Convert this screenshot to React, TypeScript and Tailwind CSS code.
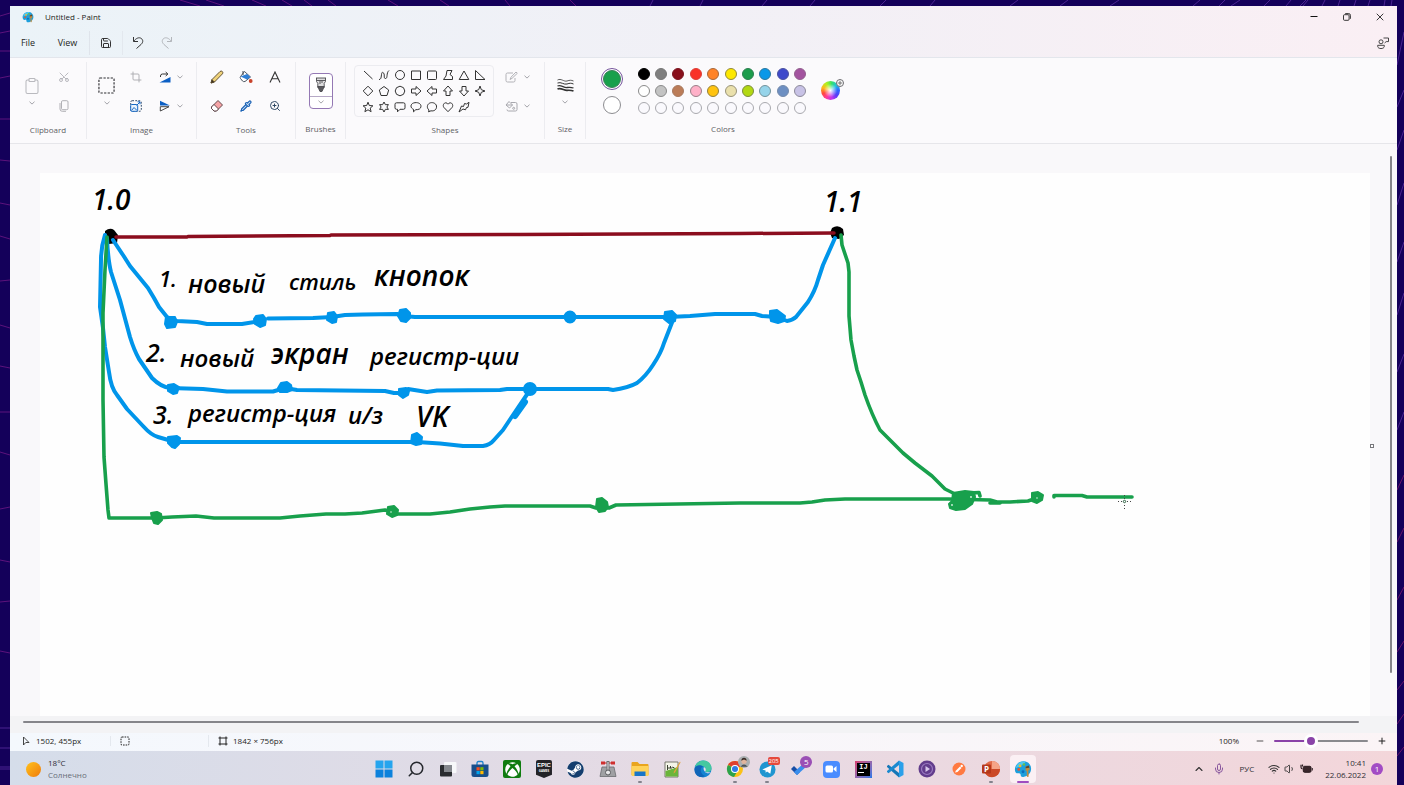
import { useState, type ReactNode } from "react";
import {
  Crop,
  Scissors,
  Clipboard,
  ZoomIn,
  Save,
  Wifi,
  Volume1,
  Mic,
  ChevronUp,
  Search,
  X,
  Minus,
  Plus,
  Pipette,
} from "lucide-react";
import { FaXbox, FaSteam } from "react-icons/fa";

const BLUE = "#0095ea";
const GREEN = "#18a04c";

function Chevron() {
  return (
    <svg viewBox="0 0 6 4" className="h-1 w-1.5 shrink-0" fill="none" stroke="#9a9a9f" strokeWidth="0.9">
      <path d="M0.5 0.7 3 3.1 5.5 0.7" />
    </svg>
  );
}

function PaintLogo({ className }: { className: string }) {
  return (
    <svg viewBox="0 0 20 20" className={className}>
      <path d="M10.5 1.5C5 1.5 1 5.600 1 10.500c0 3 1.600 4.600 3.800 4.300 2-.3 2.600.6 2.600 2 0 1.600 1.300 2.200 3 2 5-.4 8.600-4.500 8.600-9C19 5 15.600 1.500 10.500 1.500z" fill="#1d9fdc" />
      <path d="M3 6C5 2.500 9 1 13 2c-2 3-6 5-11 7z" fill="#4cc8f0" />
      <circle cx="5.300" cy="10.500" r="1.500" fill="#e8552d" />
      <circle cx="6.800" cy="6.600" r="1.500" fill="#f6b92b" />
      <circle cx="11" cy="4.900" r="1.400" fill="#6bc04b" />
      <circle cx="10" cy="13" r="1.600" fill="#0b6fbe" />
      <path d="M13 7.500 16.500 6l1 5-1.700.6.5 6.400c0 1-1.800 1.200-2 0l-.2-6-1.300-.4z" fill="#c08a3c" />
      <path d="M13 7.500 16.500 6l.6 2.500-4.200.6z" fill="#5d4630" />
    </svg>
  );
}

function Backdrop() {
  return (
    <svg className="absolute inset-0 h-full w-full" viewBox="0 0 1404 785" preserveAspectRatio="none" fill="none" strokeWidth="1">
      <path
        stroke="#5c127c"
        d="M0 16 10 13M0 33 10 31M0 51 10 51M0 78 10 76M0 119h10M0 160l10 1M0 203l10 2M0 236l10 3M0 281l10-1M0 325l10 3M0 366l10 2M0 412h10M0 452l10 3M0 509l10-2M0 560l10 2M0 602l10-1M0 651l10 2M180 0l20 6M206 0l18 6M252 0l14 6M282 0l10 6M304 0l8 6M328 0l8 6M388 0l10 6M440 0l9 6M505 0l5 6M570 0l6 6"
      />
      <path
        stroke="#4b2390"
        d="M0 728h10M0 748h10M0 767h10M0 769h10M650 6l3-6M700 6l3-6M762 6l5-6M810 6l5-6M880 6l6-6M930 6l5-6M1010 6l8-6M1060 6l8-6M1110 6l9-6M1193 6l7-6M1219 6l6-6M1231 6l9-6M1264 6l6-6M1286 6l5-6M1300 6l6-6M1303 6l5-6M1322 6l3-6M1338 6l2-6M1354 6l2-6M1368 6l2-6M1384 6l1-6M1391 6l1-6M1397 65l7-33M1397 107l7-17M1397 150l7-20M1397 205l7-22M1397 262l7-20M1397 315l7-22M1397 372l7-18M1397 430l7-18"
      />
      <path stroke="#6a1468" d="M1397 490l7-15M1397 542l7-14M1397 600l7-13M1397 652l7-11M1397 690l7-9M1397 724l7-10M1397 756l7-9" />
    </svg>
  );
}

function TitleBar() {
  const winBtn = "grid w-[33px] place-items-center";
  return (
    <header className="flex h-[22px] items-stretch pr-px">
      <div className="flex flex-1 items-center gap-[11px] pl-3">
        <PaintLogo className="h-3 w-3" />
        <h1 className="text-[8px] text-[#1e1e22]">Untitled - Paint</h1>
      </div>
      <button aria-label="Minimize" className={winBtn}>
        <svg viewBox="0 0 8 8" className="h-2 w-2" stroke="#111" strokeWidth="1"><path d="M.5 3.500h7" /></svg>
      </button>
      <button aria-label="Restore" className={winBtn}>
        <svg viewBox="0 0 8 8" className="h-2 w-2" fill="none" stroke="#222" strokeWidth="0.9">
          <rect x=".5" y="1.700" width="5.600" height="5.600" rx="1" />
          <path d="M2.200.6h3.500q1.700 0 1.700 1.700v3.500" />
        </svg>
      </button>
      <button aria-label="Close" className={winBtn}>
        <X className="h-3 w-3" stroke="#222" strokeWidth={1.8} />
      </button>
    </header>
  );
}

function MenuBar() {
  return (
    <nav className="flex h-[30px] items-center border-b border-[#e3e6ec] text-[9px] text-[#1e1e22]">
      <button className="w-9">File</button>
      <button className="w-[43px]">View</button>
      <span className="h-6 w-px bg-[#dfe4eb]" />
      <button aria-label="Save" className="grid w-8 place-items-center">
        <Save className="h-3 w-3" stroke="#333" strokeWidth={2} />
      </button>
      <span className="h-6 w-px bg-[#e3e8ee]" />
      <button aria-label="Undo" className="grid w-[30px] place-items-center">
        <svg viewBox="0 0 12 14" className="h-[14px] w-3" fill="none" stroke="#333" strokeWidth="1">
          <path d="M1.500 1v4.500H6M1.700 5.300C4 2.300 7 .8 9.300 2.500c2.300 1.700 1.600 4.200-.3 6L4.500 12.500" />
        </svg>
      </button>
      <button aria-label="Redo" className="grid w-7 place-items-center">
        <svg viewBox="0 0 12 14" className="h-[14px] w-3" fill="none" stroke="#b3b6bb" strokeWidth="1">
          <path d="M10.500 1v4.500H6M10.300 5.300C8 2.300 5 .8 2.700 2.500.4 4.200 1.100 6.700 3 8.500l4.500 4" />
        </svg>
      </button>
      <span className="flex-1" />
      <button aria-label="Feedback" className="mr-2 grid place-items-center">
        <svg viewBox="0 0 12 12" className="h-3 w-3" fill="none" stroke="#333" strokeWidth="0.900">
          <circle cx="4" cy="4.800" r="2" />
          <path d="M.7 8.300h6.600v1c0 3-6.600 3-6.600 0zM6.500 1h5v3.600h-2.300L7.600 6" />
        </svg>
      </button>
    </nav>
  );
}

function Group({ label, className, children }: { label: string; className: string; children: ReactNode }) {
  return (
    <section aria-label={label} className={`flex shrink-0 flex-col border-r border-[#ececf0] ${className}`}>
      <div className="flex h-[58px] items-center justify-center">{children}</div>
      <div className="flex h-5 items-center justify-center text-[8px] text-[#5e5e64]">{label}</div>
    </section>
  );
}

function IconButton({ label, children, className = "" }: { label: string; children: ReactNode; className?: string }) {
  return (
    <button aria-label={label} className={`flex h-[29px] items-center justify-center ${className}`}>
      {children}
    </button>
  );
}

const SHAPES: { name: string; d: string }[] = [
  { name: "Line", d: "M2 2 10.500 10" },
  { name: "Curve", d: "M1 10.500C4.500 11 2.500 2 5 3.500s0 6 2.500 6S8 4 11 1.500" },
  { name: "Oval", d: "M10.500 6a4.500 4.500 0 1 1-9 0 4.500 4.500 0 0 1 9 0z" },
  { name: "Rectangle", d: "M1.500 2h9v8.500h-9z" },
  { name: "Rounded rectangle", d: "M2.500 2h7q1 0 1 1v6.500q0 1-1 1h-7q-1 0-1-1V3q0-1 1-1z" },
  { name: "Polygon", d: "M5 1.500h5L8 5.500l2.500 2v3h-9L4 7z" },
  { name: "Triangle", d: "M6 2 10.800 10.500H1.200z" },
  { name: "Right triangle", d: "M1.500 1.500 11 10.500H1.500z" },
  { name: "Diamond", d: "M6 1.200 10.800 6 6 10.800 1.200 6z" },
  { name: "Pentagon", d: "M6 1.500 10.700 5 9 10.500H3L1.300 5z" },
  { name: "Hexagon", d: "M6 1.200l3.500 1.500 1.300 3.300-1.300 3.300L6 10.800 2.500 9.300 1.200 6l1.300-3.300z" },
  { name: "Right arrow", d: "M1.500 4H6V1.500L11 6l-5 4.500V8H1.500z" },
  { name: "Left arrow", d: "M10.500 4H6V1.500L1 6l5 4.500V8h4.500z" },
  { name: "Up arrow", d: "M4 10.500V6H1.500L6 1l4.500 5H8v4.500z" },
  { name: "Down arrow", d: "M4 1.500V6H1.500L6 11l4.500-5H8V1.500z" },
  { name: "Four-point star", d: "M6 1l1.300 3.700L11 6 7.300 7.300 6 11 4.700 7.300 1 6l3.700-1.300z" },
  { name: "Five-point star", d: "M6 1.200l1.300 3.300 3.600.3-2.700 2.300.9 3.600L6 8.800l-3.100 1.900.9-3.600L1.100 4.800l3.600-.3z" },
  { name: "Six-point star", d: "M6 1l1.400 2.700 3-.1L8.900 6l1.500 2.400-3-.1L6 11 4.600 8.300l-3 .1L3.100 6 1.600 3.600l3 .1z" },
  { name: "Rounded callout", d: "M2.500 1.800h7q1.500 0 1.500 1.500v3.500q0 1.500-1.500 1.500H6l-2.500 2.500V8.300h-1Q1 8.300 1 6.800V3.300q0-1.500 1.500-1.500z" },
  { name: "Oval callout", d: "M3.500 8.300C0 7 .3 3 3.500 2 7.500.800 11 2.500 11 5.200S8.500 8.800 5.800 8.700L3.500 10.800z" },
  { name: "Cloud callout", d: "M3 9C.5 7 1 3.500 3.500 2.200 6 .8 10 2 10.500 5 11 8.500 8 10.500 5 9.800L2.500 10.800z" },
  { name: "Heart", d: "M6 10.700 1.800 6.300C.2 4 2.500.7 5 2.200l1 1 1-1c2.500-1.500 4.800 1.800 3.200 4.100z" },
  { name: "Lightning", d: "M1 11 3.500 5 5.500 5.500 6.500 2.500 8.500 3 11 1.300 10 6.300 8.500 6.500 7.500 8.800 5 8z" },
];

const SWATCHES: { name: string; cls: string }[] = [
  { name: "Black", cls: "bg-[#000000] border-[#000000]" },
  { name: "Gray", cls: "bg-[#7f7f7f] border-[#777777]" },
  { name: "Dark red", cls: "bg-[#880f1b] border-[#7c1620]" },
  { name: "Red", cls: "bg-[#f93227] border-[#dd4038]" },
  { name: "Orange", cls: "bg-[#ff8328] border-[#a8673a]" },
  { name: "Yellow", cls: "bg-[#fde800] border-[#938a3a]" },
  { name: "Green", cls: "bg-[#1c9c4c] border-[#2c8050]" },
  { name: "Turquoise", cls: "bg-[#0a98e8] border-[#2c789e]" },
  { name: "Indigo", cls: "bg-[#3f4acb] border-[#4c53a0]" },
  { name: "Purple", cls: "bg-[#a3539f] border-[#93608f]" },
  { name: "White", cls: "bg-white border-[#8a8a8a]" },
  { name: "Light gray", cls: "bg-[#c3c3c3] border-[#8a8a8a]" },
  { name: "Brown", cls: "bg-[#bb7c58] border-[#a87a60]" },
  { name: "Rose", cls: "bg-[#ffb0c8] border-[#9a7f88]" },
  { name: "Gold", cls: "bg-[#ffc30f] border-[#93803f]" },
  { name: "Light yellow", cls: "bg-[#eae0ac] border-[#98937a]" },
  { name: "Lime", cls: "bg-[#b2d812] border-[#7d8c40]" },
  { name: "Light turquoise", cls: "bg-[#96d4ea] border-[#74939c]" },
  { name: "Blue-gray", cls: "bg-[#6d8fc2] border-[#758bab]" },
  { name: "Lavender", cls: "bg-[#c8c2e6] border-[#8d8a9a]" },
  ...Array.from({ length: 10 }, (_, i) => ({ name: `Custom color ${i + 1}`, cls: "bg-[#faf9fd] border-[#a9a9ae]" })),
];

function Ribbon() {
  return (
    <div className="flex h-[86px] border-b border-[#e6e6ea] bg-[#fbfafc] py-1">
      <Group label="Clipboard" className="w-[77px]">
        <button aria-label="Paste" className="flex w-8 flex-col items-center gap-1.5">
          <Clipboard className="h-[18px] w-[18px]" stroke="#b9b9be" strokeWidth={1.4} />
          <Chevron />
        </button>
        <div className="w-8">
          <IconButton label="Cut" className="w-8"><Scissors className="h-3 w-3 -rotate-90" stroke="#a8a8ae" strokeWidth={1.6} /></IconButton>
          <IconButton label="Copy" className="w-8">
            <svg viewBox="0 0 10 12" className="h-3 w-2.5" fill="none" stroke="#a8a8ae" strokeWidth="0.9">
              <rect x="2.500" y=".7" width="6.500" height="9" rx="1.200" />
              <path d="M1 3v6q0 2.300 2.300 2.300H7" />
            </svg>
          </IconButton>
        </div>
      </Group>

      <Group label="Image" className="w-[110px]">
        <button aria-label="Select" className="flex w-[30px] flex-col items-center gap-[7px]">
          <svg viewBox="0 0 18 18" className="h-[17px] w-[17px]" fill="none" stroke="#2b2b2f" strokeWidth="1.200" strokeDasharray="2.400 1.400">
            <rect x="1" y="1" width="16" height="16" rx="1" />
          </svg>
          <Chevron />
        </button>
        <div className="w-7">
          <IconButton label="Crop" className="w-7"><Crop className="h-3 w-3" stroke="#a8a8ae" strokeWidth={1.8} /></IconButton>
          <IconButton label="Resize" className="w-7">
            <svg viewBox="0 0 12 12" className="h-3 w-3" fill="none">
              <rect x=".7" y=".7" width="10.600" height="10.600" rx="1.500" stroke="#2f4a6a" strokeDasharray="1.800 1.300" />
              <rect x=".7" y="4.500" width="7" height="6.800" rx="1" fill="#e9f3fd" stroke="#1768c4" />
              <path d="m1.500 10.500 2.500-3 3 3M6.500 5.500 10 2M7.500 1.800H10v2.500" stroke="#1768c4" />
            </svg>
          </IconButton>
        </div>
        <div className="w-[42px]">
          <IconButton label="Rotate" className="w-full gap-1.5">
            <svg viewBox="0 0 12 12" className="h-3 w-3">
              <path d="M.5 11.500h11V6z" fill="#0c5fc4" />
              <path d="M1.500 6V5q0-2 2-2h5M6.700 1l2.200 2-2.200 2" fill="none" stroke="#333" strokeWidth="1" />
            </svg>
            <Chevron />
          </IconButton>
          <IconButton label="Flip" className="w-full gap-1.5">
            <svg viewBox="0 0 12 12" className="h-3 w-3">
              <path d="M1 .8v4.700h10z" fill="#0c5fc4" />
              <path d="M1.300 11V6.700H10z" fill="#fff" stroke="#333" strokeWidth=".9" />
            </svg>
            <Chevron />
          </IconButton>
        </div>
      </Group>

      <Group label="Tools" className="w-[99px]">
        <div className="grid grid-cols-3">
          <IconButton label="Pencil" className="w-[29px]">
            <svg viewBox="0 0 14 14" className="h-3.5 w-3.5" stroke="#55452a" strokeWidth=".9">
              <path d="m1 13 1-3.500L10 1.500q1.300-1 2.300 0t.2 2.300L4.500 12z" fill="#efd27a" />
              <path d="m1 13 1-3.300L4.300 12z" fill="#3a3020" />
            </svg>
          </IconButton>
          <IconButton label="Fill" className="w-[29px]">
            <svg viewBox="0 0 14 14" className="h-3.5 w-3.5">
              <path d="M5.500 1.500 11.500 7 6 11.500Q4.500 12 3.500 11L1.500 8.500Q.8 7.500 1.500 6.500z" fill="#fff" stroke="#3a4450" strokeWidth=".9" />
              <path d="M1.500 6.500 8 4l3.500 3L8 9.500z" fill="#2f7fd6" />
              <path d="M4 1v4" stroke="#3a4450" />
              <circle cx="11.700" cy="11" r="1.900" fill="#c8432b" />
            </svg>
          </IconButton>
          <IconButton label="Text" className="w-[29px]">
            <svg viewBox="0 0 12 12" className="h-3 w-3" fill="none" stroke="#333" strokeWidth="1.100"><path d="M1 11.500 6 1l5 10.500M2.800 7.800h6.400" /></svg>
          </IconButton>
          <IconButton label="Eraser" className="w-[29px]">
            <svg viewBox="0 0 14 14" className="h-3.5 w-3.5" stroke="#553a3e" strokeWidth=".9">
              <path d="M8 1.500 12.500 6 6.500 12H4L1.500 9.500V8z" fill="#f6a3a6" />
              <path d="M4 5.500 8.500 10 6.500 12H4L1.500 9.500V8z" fill="#fff" />
            </svg>
          </IconButton>
          <IconButton label="Color picker" className="w-[29px]"><Pipette className="h-3 w-3" stroke="#1b62b5" fill="#d5e6f8" strokeWidth={2.4} /></IconButton>
          <IconButton label="Magnifier" className="w-[29px]"><ZoomIn className="h-3 w-3" stroke="#28415e" strokeWidth={1.9} /></IconButton>
        </div>
      </Group>

      <Group label="Brushes" className="w-[50px]">
        <button aria-label="Brushes" className="flex h-9 w-6 flex-col items-center rounded border border-[#9478b4] bg-white">
          <span className="grid h-[23px] w-full place-items-center border-b border-[#b6a9c6]">
            <svg viewBox="0 0 12 16" className="h-4 w-3" stroke="#4a4a4e" strokeWidth=".9">
              <path d="M1.500 1v3.500l1.300 1.800v4.200h6.400V6.300l1.300-1.800V1" fill="#dededf" />
              <path d="M1 1h10M2 3.500h8M5 4v3M7 4v2" />
              <path d="M2.800 9.500h6.400L7 14.500H5z" fill="#5a5a5e" />
            </svg>
          </span>
          <span className="grid flex-1 place-items-center"><Chevron /></span>
        </button>
      </Group>

      <Group label="Shapes" className="w-[199px]">
        <div className="grid grid-cols-8 rounded border border-[#ececf0] px-[5px] py-px">
          {SHAPES.map((s) => (
            <button key={s.name} aria-label={s.name} className="grid h-4 w-4 place-items-center">
              <svg viewBox="0 0 12 12" className="h-3 w-3" fill="none" stroke="#333" strokeWidth="1"><path d={s.d} /></svg>
            </button>
          ))}
        </div>
        <div className="w-[42px] pl-1">
          <IconButton label="Shape outline" className="w-full gap-1.5">
            <svg viewBox="0 0 13 12" className="h-3 w-[13px]" fill="none" stroke="#b2b2b7" strokeWidth="1">
              <path d="M8 2H2.500Q1 2 1 3.500v6Q1 11 2.500 11h6q1.500 0 1.500-1.500V7M5 8.500l1-2.300L11 1l1.300 1.300-5.200 5z" />
            </svg>
            <Chevron />
          </IconButton>
          <IconButton label="Shape fill" className="w-full gap-1.5">
            <svg viewBox="0 0 13 12" className="h-3 w-[13px]" fill="none" stroke="#a8a8ae" strokeWidth="1">
              <path d="M6 2.500h4.500Q12 2.500 12 4v5.500q0 1.500-1.500 1.500h-7Q2 11 2 9.500M1 5l3-3.500L7.500 5 4.500 8zM1 5h6.500" />
              <circle cx="8.700" cy="8.300" r="1" />
            </svg>
            <Chevron />
          </IconButton>
        </div>
      </Group>

      <Group label="Size" className="w-[41px]">
        <button aria-label="Size" className="flex flex-col items-center gap-2">
          <svg viewBox="0 0 17 14" className="h-[14px] w-[17px]" fill="none" stroke="#333">
            <path d="M.5 2C4 0 7 4 10 3s4-1 6.500 0" strokeWidth=".8" />
            <path d="M.5 5C4 3.500 7 7 10 6s4-1 6.500 0" strokeWidth="1" />
            <path d="M.5 8C4 6.500 7 10 10 9.500s4-.5 6.500.5" strokeWidth="1.300" />
            <path d="M.5 11C4 9.500 7 12.500 10 12.300s4-.3 6.500.7" strokeWidth="1.700" />
          </svg>
          <Chevron />
        </button>
      </Group>

      <section aria-label="Colors" className="flex w-[274px] shrink-0 flex-col">
        <div className="flex h-[58px] items-center pl-[15px]">
          <div className="flex w-[22px] flex-col items-center gap-1.5">
            <button aria-label="Color 1" className="grid h-[22px] w-[22px] place-items-center rounded-full border border-[#76559c] bg-white">
              <span className="h-[18px] w-[18px] rounded-full border border-[#3a8058] bg-[#18a04c]" />
            </button>
            <button aria-label="Color 2" className="h-[18px] w-[18px] rounded-full border border-[#8c8c90] bg-white" />
          </div>
          <div className="ml-3 grid w-[174px] grid-cols-10">
            {SWATCHES.map((s) => (
              <button key={s.name} aria-label={s.name} className="grid h-[17px] place-items-center">
                <span className={`h-3 w-3 rounded-full border ${s.cls}`} />
              </button>
            ))}
          </div>
          <button aria-label="Edit colors" className="relative ml-3 h-[19px] w-[19px] rounded-full bg-[radial-gradient(circle,white,transparent_50%),conic-gradient(from_90deg,#2f62ff,#5a3cf5,#c034ef,#ff3a9a,#ff4a3a,#ffb91a,#b2f21c,#34e06c,#20c0e0,#2f62ff)]">
            <span className="absolute -top-0.5 -right-1 grid h-2 w-2 place-items-center rounded-full border border-[#6c6c70] bg-white">
              <svg viewBox="0 0 6 6" className="h-1.5 w-1.5" stroke="#555" strokeWidth=".8"><path d="M3 .8v4.400M.8 3h4.400" /></svg>
            </span>
          </button>
        </div>
        <div className="flex h-5 items-center justify-center text-[8px] text-[#5e5e64]">Colors</div>
      </section>
    </div>
  );
}

type Word = { x: number; y: number; size: number; t: string };

const WORDS: Word[] = [
  { x: 92, y: 210, size: 28, t: "1.0" },
  { x: 824, y: 212, size: 28, t: "1.1" },
  { x: 159, y: 287, size: 22, t: "1." },
  { x: 188, y: 293, size: 25, t: "новый" },
  { x: 289, y: 290, size: 22, t: "стиль" },
  { x: 374, y: 286, size: 28, t: "кнопок" },
  { x: 146, y: 362, size: 25, t: "2." },
  { x: 180, y: 367, size: 24, t: "новый" },
  { x: 271, y: 364, size: 28, t: "экран" },
  { x: 370, y: 365, size: 24, t: "регистр-ции" },
  { x: 153, y: 424, size: 25, t: "3." },
  { x: 188, y: 422, size: 24, t: "регистр-ция" },
  { x: 348, y: 424, size: 24, t: "и/з" },
  { x: 416, y: 427, size: 28, t: "VK" },
];

function Drawing() {
  return (
    <svg
      className="absolute inset-0 h-full w-full"
      viewBox="40 173 1330 543"
      preserveAspectRatio="xMinYMin meet"
      fill="none"
      strokeWidth="4"
      strokeLinecap="round"
      strokeLinejoin="round"
    >
      <path d="M105 231q5-4 9-1l4 5-1 8-8 1-4-4z" fill="#000" />
      <path d="M832 228q6-4 11 1l1 6-5 4-7-1-2-5z" fill="#000" />
      <path stroke="#8b0d1e" strokeWidth="3.500" d="M116 237H187L188 236.500 330 235.500 331 235 520 234.500 740 233.500 834 233" />
      <g stroke={BLUE}>
        <path d="M113 240 123 255 130 266 139 277 148 288 154 298 159 307 167 317 177 321 197 322 207 324H242L260 321M268 318.500 313 318 332 317 345 315 363 314.500 397 314 404 316 415 317H669L690 316 715 314H755L762 316 777 317 787 321Q793 320 796 317L808 302Q815 291 818 280L823 265 835 238" />
        <path d="M107 238Q108 260 111 272L120 300 130 337Q134 350 139 359L152 378Q161 387 170 388L203 389 227 391.500H273L285 388 297 390 385 391 394 393H403L408 389 427 392 437 390.500 500 390 507 389H608L613 390Q628 388 637 383 646 376 653 365 661 353 664 343L673 320" />
        <path d="M105 235Q101 247 101 260L100 307 103 328 105 347 109 372Q111 388 117 395L127 409 143 426Q151 435 158 437L175 442H417L440 443.500 463 446H483Q490 445 494 440L503 430 513 415 528 393" />
        <path strokeWidth="6" d="M515 416 525 402" />
      </g>
      <g fill={BLUE} stroke={BLUE} strokeWidth="2">
        <path d="M166 317h9l2 5-2 5-8 1-2-4z" />
        <path d="M256 316l7-1 3 4-1 6-5 2-5-3-1-5z" />
        <path d="M328 313l6-1 3 4-1 6-4 1-5-3z" />
        <path d="M400 310l6-1 4 4v5l-4 4-5-1-3-5z" />
        <circle cx="570" cy="317" r="5.500" />
        <path d="M665 312l7-1 4 4-1 6-6 2-5-4z" />
        <path d="M770 311l7-1 8 6-1 5-6 2-7-2-1-5z" />
        <path d="M168 385l6-1 5 3-2 6-4 1-5-3z" />
        <path d="M281 383l6-1 4 3 1 5-5 2h-7l-2-4z" />
        <path d="M399 389l7-1 3 3-1 4-5 3-4-3z" />
        <circle cx="530" cy="389" r="6" />
        <path d="M168 437l9-1 3 2-1 6-4 4-3-1-4-4z" />
        <path d="M412 435l5-2 5 4-1 7-5 1-5-2z" />
      </g>
      <g stroke={GREEN} strokeWidth="3.600">
        <path d="M107 237 105 270 103 313V400L104 457 106 484 108 510 109 518H156L172 517 196 516 214 518H280L300 516 326 514H345L362 513 385 510 398 514 430 514 450 512 470 509 490 507 505 506H590L596 508 609 508 616 505 740 503H800L812 502 825 500 845 499H948L990 500 997 502 1010 502 1028 501 1037 498" />
        <path d="M841 235 842 245 848 263 849 272V316L851 340 854 356 857 370 861 382 865 395Q872 415 880 430L892 442 903 453 915 463 932 476 945 489 957 495M1054 497V495.500H1082L1087 497H1132M968 493 979 492.500 980 496M990 503 1000 503" />
      </g>
      <g fill={GREEN} stroke={GREEN} strokeWidth="2">
        <path d="M151 513l6-1 4 2 1 6-4 4-4-1-2-5z" />
        <path d="M388 507l6-1 4 4-1 5-5 2-5-3z" />
        <path d="M597 499l5-1 5 4 1 5-3 4-6 1-3-5z" />
        <path d="M953 493l12-2 9 1 1 5-3 7-7 5-9 1-6-2-1-4 3-3z" />
        <path d="M1032 493l6-1 5 3-1 5-5 3-5-2z" />
      </g>
      <g fill="#d9f3e2">
        <circle cx="952" cy="505" r=".9" />
        <circle cx="971" cy="497" r=".9" />
        <circle cx="1037" cy="498" r=".8" />
        <circle cx="391" cy="512" r=".8" />
      </g>
      <g stroke="#444" strokeWidth="1" strokeLinecap="butt" strokeDasharray="1 2">
        <path d="M1124.500 495v4M1124.500 505v5M1118 501.500h4M1127 501.500h5" />
        <circle cx="1124.500" cy="501.500" r="1.200" strokeDasharray="none" stroke="#2a6040" />
      </g>
      <g className="fill-black font-['Open_Sans',sans-serif] font-semibold italic">
        {WORDS.map((w) => (
          <text key={`${w.x}-${w.y}`} x={w.x} y={w.y} fontSize={w.size}>
            {w.t}
          </text>
        ))}
      </g>
    </svg>
  );
}

function Workspace() {
  return (
    <main className="flex min-h-[400px] flex-1 flex-col bg-[#f9f8fa]">
      <div className="flex flex-1">
        <div className="flex flex-1 pt-[29px] pl-[30px]">
          <div className="relative flex-1 bg-[#fefefe]">
            <Drawing />
          </div>
        </div>
        <div className="flex w-5 items-center pt-[31px]">
          <span className="h-1 w-1 border border-[#77777c] bg-white" />
        </div>
        <div className="flex w-[7px] pt-3 pb-[43px]">
          <span className="w-0.5 rounded bg-[#85858a]" />
        </div>
      </div>
      <div className="h-[17px] bg-[#f3f3f5] pt-[5px] pr-[38px] pl-[13px]">
        <div className="h-0.5 rounded bg-[#85858a]" />
      </div>
    </main>
  );
}

function StatusBar() {
  const [zoom, setZoom] = useState(38);
  return (
    <footer className="flex h-[18px] items-center bg-linear-to-r from-[#f4f8fd] via-[#f8f7fb] to-[#fbf4f6] pb-0.5 text-[8px] text-[#1e1e22]">
      <div className="flex w-[100px] items-center gap-1.5 pl-3">
        <svg viewBox="0 0 8 10" className="h-2.5 w-2" fill="none" stroke="#333" strokeWidth=".9"><path d="M1.500 1v8l2.300-2.500H7z" /></svg>
        1502, 455px
      </div>
      <div className="flex w-[98px] items-center border-l border-[#e4e8ee] pl-[9px]">
        <svg viewBox="0 0 10 10" className="h-2.5 w-2.5" fill="none" stroke="#222" strokeWidth="1" strokeDasharray="1.600 1">
          <rect x="1" y="1" width="8" height="8" rx="1" />
        </svg>
      </div>
      <div className="flex flex-1 items-center gap-[5px] border-l border-[#e4e8ee] pl-[9px]">
        <svg viewBox="0 0 10 10" className="h-2.5 w-2.5" fill="none" stroke="#222" strokeWidth="1"><path d="M2 .5v9M8 .5v9M.5 2h9M.5 8h9" /></svg>
        1842 × 756px
      </div>
      <label htmlFor="zoom" className="pr-4">100%</label>
      <button aria-label="Zoom out" className="pr-[9px]"><Minus className="h-2.5 w-2.5" stroke="#333" strokeWidth={2} /></button>
      <input
        id="zoom"
        type="range"
        value={zoom}
        onChange={(e) => setZoom(Number(e.target.value))}
        className="h-0.5 w-[94px] appearance-none rounded [&::-webkit-slider-thumb]:h-3.5 [&::-webkit-slider-thumb]:w-3.5 [&::-webkit-slider-thumb]:appearance-none [&::-webkit-slider-thumb]:rounded-full [&::-webkit-slider-thumb]:border-[3px] [&::-webkit-slider-thumb]:border-white [&::-webkit-slider-thumb]:bg-[#8a43a8]"
        style={{ background: `linear-gradient(to right, #8a43a8 ${zoom}%, #8a8a8e ${zoom}%)` }}
      />
      <button aria-label="Zoom in" className="pr-[10px] pl-[9px]"><Plus className="h-2.5 w-2.5" stroke="#222" strokeWidth={2.4} /></button>
    </footer>
  );
}

const APPS: { name: string; running?: boolean; active?: boolean; icon: ReactNode }[] = [
  { name: "Start", icon: <svg viewBox="0 0 18 18" className="h-[18px] w-[18px]"><path d="M.5.500h8v8h-8zM9.500.500h8v8h-8z" fill="#25a5ee" /><path d="M.5 9.500h8v8h-8zM9.500 9.500h8v8h-8z" fill="#0c82dc" /></svg> },
  { name: "Search", icon: <Search className="h-[18px] w-[18px] -scale-x-100" stroke="#26282e" strokeWidth={2} /> },
  { name: "Task view", icon: <svg viewBox="0 0 18 18" className="h-[18px] w-[18px]"><rect x="5" y="2" width="12.500" height="11" rx="1" fill="#f7f8fa" /><rect x="1" y="5" width="12" height="11.500" rx="1" fill="#2a2c30" /><path d="M5 5h8v7H5z" fill="#85888e" /></svg> },
  { name: "Microsoft Store", icon: <svg viewBox="0 0 18 18" className="h-[18px] w-[18px]"><path d="M6 5V3q0-1.500 1.500-1.500h3Q12 1.500 12 3v2" fill="none" stroke="#1b82cc" strokeWidth="1.300" /><path d="M.5 4.500h17v10q0 2.500-2.500 2.500H3Q.5 17 .5 14.500z" fill="#174f8c" /><path d="M5.500 7.200h3.200v3.200H5.500z" fill="#f25022" /><path d="M9.300 7.200h3.200v3.200H9.300z" fill="#7fba00" /><path d="M5.500 11h3.200v3.200H5.500z" fill="#00a4ef" /><path d="M9.300 11h3.200v3.200H9.300z" fill="#ffb900" /></svg> },
  { name: "Xbox", icon: <span className="grid h-[18px] w-[18px] place-items-center rounded-xs bg-[#107c10]"><FaXbox className="h-[15px] w-[15px] text-white" /></span> },
  { name: "Epic Games", icon: <span className="flex h-[18px] w-4 flex-col items-center rounded-xs bg-[#232327] text-white [clip-path:polygon(0_0,100%_0,100%_82%,50%_100%,0_82%)]"><span className="font-['Liberation_Sans',sans-serif] text-[6px] leading-[10px] font-bold">EPIC</span><span className="text-[3px] leading-[3px] font-bold">GAMES</span></span> },
  { name: "Steam", icon: <span className="grid h-[17px] w-[17px] place-items-center rounded-full bg-white"><FaSteam className="h-[17px] w-[17px] text-[#143e6e]" /></span> },
  { name: "Save tool", icon: <svg viewBox="0 0 18 18" className="h-[18px] w-[18px]"><path d="M3 7h12l2 9.500H1z" fill="#9fa0a3" stroke="#6a6b6e" strokeWidth=".8" /><path d="M2 1.500h4v3H2zM12 1.500h4v3h-4z" fill="#cf2f2f" /><path d="M6 3h6" stroke="#cf5a5a" strokeWidth="1.500" /><path d="M9 1v10" stroke="#6c6d70" strokeWidth="3" /><path d="M9 2v8" stroke="#e4e4e6" /><circle cx="9" cy="12.500" r="2.500" fill="#e8e8ea" stroke="#5a5b5e" /></svg> },
  { name: "File Explorer", running: true, icon: <svg viewBox="0 0 18 18" className="h-[18px] w-[18px]"><path d="M.5 3Q.5 2 1.500 2h5l2 2h8q1 0 1 1v10h-17z" fill="#e9a51e" /><path d="M.5 6h17v9.500q0 .5-1 .5h-15q-1 0-1-1z" fill="#ffd35a" /><path d="M3.500 11.500h11V16h-11z" fill="#1876c8" /></svg> },
  { name: "Notepad++", icon: <svg viewBox="0 0 18 18" className="h-[18px] w-[18px]"><path d="M2 2h13v15H2z" fill="#f4f5e8" stroke="#6b6e60" strokeWidth=".9" /><path d="M2.500 11 15 7v9.500H2.500z" fill="#6ab53a" /><path d="M4.500 5v5M4.500 8h3v-2M7.500 9l2-2 2 1" fill="none" stroke="#3a4030" /><path d="m17 1.500-6 10-.5 2 1.500-1 5.500-10z" fill="#e4a13a" /></svg> },
  { name: "Edge", icon: <svg viewBox="0 0 18 18" className="h-[18px] w-[18px]"><circle cx="9" cy="9" r="8.500" fill="#1583d2" /><path d="M1 7C2 2.500 6 .5 9.500.5c5 0 8.300 4 8 8-.2 3-3 4.200-6.500 3.200C13.500 7 8 4 1 7z" fill="#45c8a0" /><path d="M.5 9C1 5.500 6 4 9 6.500c-3 1-3.500 7 2 9.500-5 3-11-1-10.500-7z" fill="#1065b8" /><path d="M17 12.500c-1.500 1-5 1-6-.8-2-2-1.500-4-1-4.700 2 1 2.500 3 1 4.700 1.800.8 4.500.5 6 .8z" fill="#e4e0ea" /></svg> },
  { name: "Chrome", running: true, icon: <span className="relative"><svg viewBox="0 0 18 18" className="h-[18px] w-[18px]"><circle cx="9" cy="9" r="8" fill="#fbc116" /><path d="M9 9 2 4.500A8.500 8.500 0 0 1 16.500 5.500z" fill="#e0402f" /><path d="M2 5a8 8 0 0 0 6 12l4-7z" fill="#2ba24c" /><circle cx="9" cy="9" r="4" fill="#fff" /><circle cx="9" cy="9" r="3" fill="#2f7be5" /></svg><svg viewBox="0 0 10 10" className="absolute -top-1 -right-1.5 h-3 w-3"><circle cx="5" cy="5" r="5" fill="#a9aeb0" /><path d="M2 9q3-4 6 0" fill="#4b5155" /><circle cx="5" cy="4.500" r="2.200" fill="#e1b49c" /><path d="M2.700 4q.3-2.500 2.300-2.500T7.300 4L5 3z" fill="#3a2c26" /></svg></span> },
  { name: "Telegram", running: true, icon: <span className="relative"><svg viewBox="0 0 18 18" className="h-[17px] w-[17px]"><circle cx="9" cy="9" r="8.500" fill="#2095d0" /><path d="m3.500 9 10-4.500-1.500 9-3.500-2.500L7 12.500V10z" fill="#fff" /></svg><span className="absolute -top-1 -right-1 rounded-xs bg-[#e5493c] px-px text-[6px] leading-[8px] text-white">205</span></span> },
  { name: "To Do", icon: <span className="relative"><svg viewBox="0 0 18 18" className="h-[18px] w-[18px]"><path d="m1 9 3-3 6 6-3 3z" fill="#174ea6" /><path d="M7 15 4 12 14 3l3 3z" fill="#3a8eed" /></svg><span className="absolute -top-1 -right-1 grid h-3 w-3 place-items-center rounded-full bg-[#9b4fb5] text-[8px] leading-3 text-white">5</span></span> },
  { name: "Zoom", icon: <span className="grid h-[17px] w-[17px] place-items-center rounded bg-[#4a8cff]"><svg viewBox="0 0 12 8" className="h-2 w-3" fill="#fff"><rect x=".5" y=".5" width="7.500" height="7" rx="1.500" /><path d="M8.500 3.500 11.500 1v6l-3-2.500z" /></svg></span> },
  { name: "IntelliJ IDEA", icon: <span className="grid h-[17px] w-[17px] place-items-center bg-linear-to-br from-[#d83a70] to-[#1976e8]"><span className="flex h-[13px] w-[13px] flex-col bg-black pl-px text-white"><span className="font-['Liberation_Mono',monospace] text-[7px] leading-[9px] font-bold">IJ</span><span className="h-px w-1.5 bg-white" /></span></span> },
  { name: "Visual Studio Code", icon: <svg viewBox="0 0 18 18" className="h-[18px] w-[18px]"><path d="m1 6 1.500-1.200L13 13v4.500L1 7z" fill="#1577b8" /><path d="m1 12 1.500 1.200L13 5V.5L1 11z" fill="#1b8ad0" /><path d="M13 .5 17.500 3v12L13 17.500z" fill="#2ba0ea" /></svg> },
  { name: "Media", icon: <svg viewBox="0 0 18 18" className="h-[18px] w-[18px]"><circle cx="9" cy="9" r="8.500" fill="#623d8c" /><circle cx="9" cy="9" r="5.500" fill="none" stroke="#9a7ac0" strokeWidth="1.200" /><path d="M7.500 6v6L12 9z" fill="#d6c6ea" /></svg> },
  { name: "Postman", icon: <svg viewBox="0 0 14 14" className="h-3.5 w-3.5"><circle cx="7" cy="7" r="6.500" fill="#ff7a42" /><path d="m3 10.500 1-2 4-4 1.500 1.500-4 4z" fill="#fff" /><circle cx="9.700" cy="4" r="1.200" fill="#fff" /></svg> },
  { name: "PowerPoint", running: true, icon: <svg viewBox="0 0 18 18" className="h-[18px] w-[18px]"><circle cx="10" cy="9" r="8" fill="#e06a48" /><path d="M10 1a8 8 0 0 1 8 8h-8z" fill="#f5a487" /><path d="M2.500 12A8 8 0 0 0 18 9H9z" fill="#cb4927" /><rect x="0" y="4.500" width="9" height="9" rx="1" fill="#b5371a" /><text x="2" y="12" fontSize="8" fontWeight="700" fill="#fff">P</text></svg> },
  { name: "Paint", active: true, icon: <PaintLogo className="h-[18px] w-[18px]" /> },
];

function Taskbar() {
  return (
    <div className="grid h-[34px] grid-cols-[1fr_auto_1fr] items-stretch bg-linear-to-r from-[#d5ddea] via-[#e8dae3] via-55% to-[#f3d6da] text-[8px] text-[#2e2e34]">
      <button className="flex items-center gap-[7px] pt-0.5 pl-4 text-left">
        <span className="h-[15px] w-[15px] rounded-full bg-linear-to-br from-[#ffc21c] to-[#ee7a0c]" />
        <span className="leading-3">
          <span className="block">18°C</span>
          <span className="block text-[#686d78]">Солнечно</span>
        </span>
      </button>
      <div className="grid w-[670px] grid-cols-[repeat(21,minmax(0,1fr))]">
        {APPS.map((a) => (
          <button
            key={a.name}
            aria-label={a.name}
            className={`relative grid place-items-center rounded ${a.active ? "mx-[3px] mt-1 mb-0.5 bg-[#fbf0f4]" : "mt-1 mb-0.5"}`}
          >
            {a.icon}
            {a.running && <span className="absolute bottom-0 h-0.5 w-1 rounded bg-[#85828c]" />}
            {a.active && <span className="absolute bottom-0 h-0.5 w-3 rounded bg-[#a04cc0]" />}
          </button>
        ))}
      </div>
      <div className="flex items-center justify-end pt-0.5 pr-3.5">
        <button aria-label="Hidden icons" className="mr-2"><ChevronUp className="h-3 w-3" stroke="#333" strokeWidth={2.2} /></button>
        <button aria-label="Microphone" className="mr-3.5"><Mic className="h-3 w-3" stroke="#7e4a96" strokeWidth={1.8} /></button>
        <button className="mr-3.5">РУС</button>
        <button aria-label="Network, sound and battery" className="mr-3 flex items-center gap-1">
          <Wifi className="h-3 w-3" stroke="#333" strokeWidth={2.2} />
          <Volume1 className="h-3 w-3" stroke="#333" strokeWidth={1.8} />
          <svg viewBox="0 0 13 10" className="h-2.5 w-[13px]">
            <path d="M1 .8v2.500q0 1.500 1.500 1.500M2.500.5v2" stroke="#2b1c20" strokeWidth="1.200" fill="none" />
            <rect x="3.300" y="2.300" width="7.700" height="6" rx="1.200" fill="#3a272b" stroke="#2b1c20" />
            <path d="M12.300 4v2.500" stroke="#2b1c20" />
          </svg>
        </button>
        <button className="mr-[5px] text-right leading-3">
          <span className="block">10:41</span>
          <span className="block">22.06.2022</span>
        </button>
        <button aria-label="1 notification" className="grid h-3 w-3 place-items-center rounded-full bg-[#a24cc4] text-[8px] leading-3 text-white">1</button>
      </div>
    </div>
  );
}

export default function App() {
  return (
    <div className="relative flex min-h-screen flex-col bg-[#14005a] pt-1.5 pr-[7px] pl-2.5 font-['Open_Sans',sans-serif]">
      <Backdrop />
      <div className="relative flex flex-1 flex-col overflow-hidden">
        <div className="bg-linear-to-r from-[#ebf3f8] via-[#f1f0f6] to-[#faeff4]">
          <TitleBar />
          <MenuBar />
        </div>
        <Ribbon />
        <Workspace />
        <StatusBar />
        <Taskbar />
      </div>
    </div>
  );
}
